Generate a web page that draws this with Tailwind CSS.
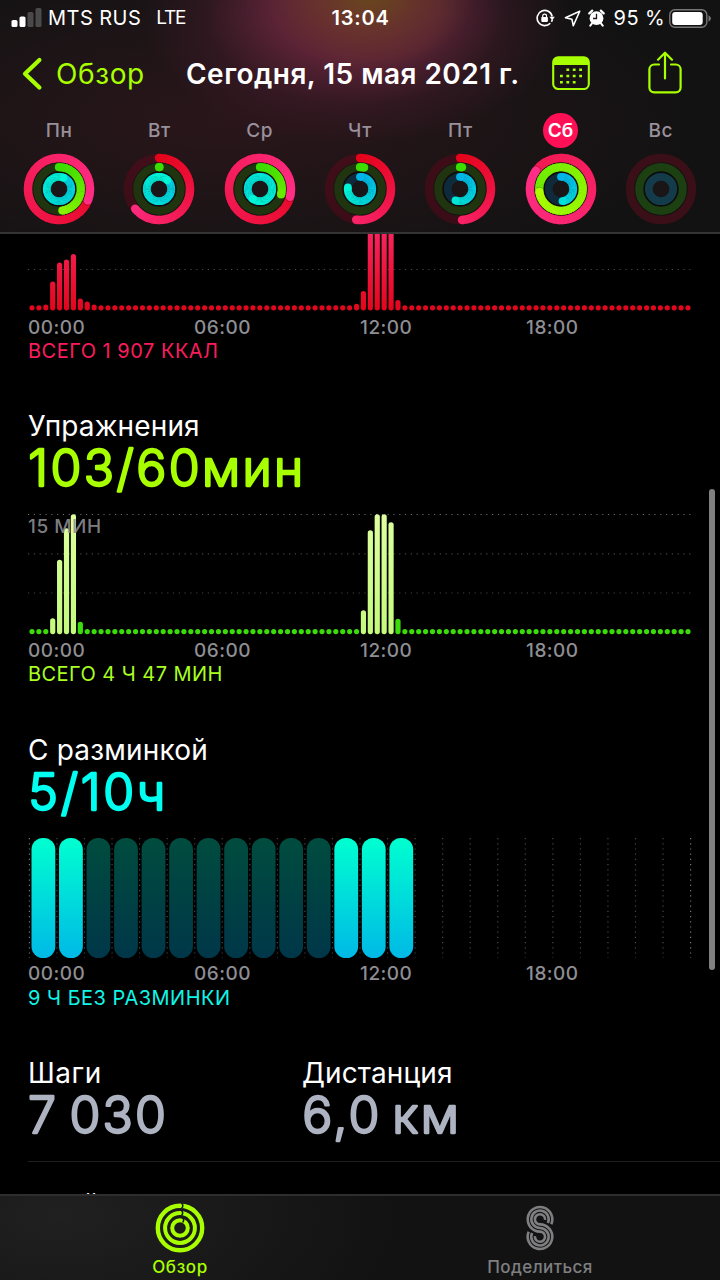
<!DOCTYPE html>
<html lang="ru">
<head>
<meta charset="utf-8">
<title>Активность</title>
<script src="https://cdn.jsdelivr.net/npm/@tailwindcss/browser@4"></script>
</head>
<body class="bg-black">
<div class="relative flex h-[1280px] w-[720px] flex-col overflow-hidden bg-black font-['Inter','Noto_Sans',sans-serif] text-white">

  <header class="flex h-[234px] shrink-0 flex-col border-b-2 border-[#353435] bg-[#121212] bg-[radial-gradient(ellipse_105px_80px_at_370px_-8px,rgba(104,78,22,0.85),rgba(108,66,30,0.45)_50%,transparent),radial-gradient(ellipse_215px_135px_at_355px_10px,rgba(112,40,62,0.95),rgba(106,38,62,0.8)_38%,rgba(80,30,50,0.35)_70%,transparent),radial-gradient(ellipse_480px_170px_at_230px_120px,rgba(58,24,32,0.6),rgba(48,24,30,0.35)_55%,transparent)]">
    <div class="flex h-9 items-center text-xl leading-9">
      <div class="flex flex-1 items-center pl-[11px]">
        <svg class="h-5 w-[31px]" viewBox="0 0 31 20"><rect x=".5" y="12" width="6" height="7" rx="1.6" fill="#fff"/><rect x="8.5" y="8.5" width="6" height="10.5" rx="1.6" fill="#fff"/><rect x="16.5" y="4" width="6" height="15" rx="1.6" fill="#4b4a4b"/><rect x="24.5" y="0" width="6" height="19" rx="1.6" fill="#4b4a4b"/></svg>
        <span class="ml-1.5 tracking-[0.45px]">MTS RUS</span>
        <span class="ml-[15px] text-[19px] tracking-[-1.2px]">LTE</span>
      </div>
      <span class="mr-0.5 font-semibold tracking-[0.8px]">13:04</span>
      <div class="flex flex-1 items-center justify-end pr-2">
        <svg class="mr-px h-[18px] w-[19px]" viewBox="0 0 19 18" fill="none" stroke="#fff" stroke-width="1.6"><path d="M16.2 7.5A7.6 7.6 0 1 0 14.3 14.2M16.4 10.5A7.6 7.6 0 0 1 15.4 12.8"/><path d="M13.4 7.8h5.4l-2.6 3.4z" fill="#fff" stroke="none"/><rect x="5.3" y="8" width="6.6" height="4.9" rx=".8" fill="#fff" stroke="none"/><path d="M6.7 8.4V7a1.9 1.9 0 0 1 3.8 0v1.4" stroke-width="1.2"/></svg>
        <svg class="mr-px ml-2 h-[17px] w-[17px]" viewBox="0 0 17 17" fill="none" stroke="#fff" stroke-width="1.6" stroke-linejoin="round"><path d="M15.7 1.3 1.4 7.7l6.5 1.5 1.4 6.6z"/></svg>
        <svg class="ml-1.5 h-[18px] w-[17px]" viewBox="0 0 17 18"><circle cx="8.5" cy="9.2" r="6.9" fill="#fff"/><g stroke="#fff" stroke-linecap="round"><path d="M1.3 4.4 4.2 1.6M15.7 4.4 12.8 1.6" stroke-width="2.2"/><path d="M4 14.4 2.3 16.6M13 14.4l1.7 2.2" stroke-width="2"/></g><path d="M8.5 4.7v4.8H5" fill="none" stroke="#241318" stroke-width="1.3"/></svg>
        <span class="ml-[9px] tracking-[0.4px]">95 %</span>
        <svg class="ml-1 h-[19px] w-[43px]" viewBox="0 0 43 19"><rect x=".8" y=".8" width="37" height="17.4" rx="5" fill="none" stroke="#777" stroke-width="1.4"/><rect x="3.2" y="3" width="30.5" height="13" rx="3" fill="#fff"/><path d="M39.5 6.2q2.4 1.2 2.4 3.3t-2.4 3.3z" fill="#777"/></svg>
      </div>
    </div>

    <nav class="flex h-[75px] items-center text-[28px] leading-8">
      <div class="flex w-[186px] items-center pl-[21px] text-[#a8ff00]">
        <svg class="h-[34px] w-[22px]" viewBox="0 0 22 34" fill="none" stroke="currentColor" stroke-width="4.2" stroke-linecap="round" stroke-linejoin="round"><path d="M18.4 3 4 16.8 18.4 30.6"/></svg>
        <span class="ml-[13px] tracking-[0.6px]">Обзор</span>
      </div>
      <h1 class="w-[366px] font-semibold tracking-[0.47px] whitespace-nowrap">Сегодня, 15 мая 2021 г.</h1>
      <svg class="mb-px h-[34px] w-[38px] text-[#a8ff00]" viewBox="0 0 38 34"><rect x="1.2" y="1.2" width="35.6" height="31.8" rx="5" fill="none" stroke="currentColor" stroke-width="2.1"/><path d="M1 9V6a5 5 0 0 1 5-5h26a5 5 0 0 1 5 5v3z" fill="currentColor"/><g fill="none" stroke="currentColor" stroke-width="2.6" stroke-dasharray="2.8 3.6"><path d="M14.4 13.8h16M8 20h22.4M8 26.2h16"/></g></svg>
      <svg class="mb-[3px] ml-[58px] h-[43px] w-[34px] text-[#a8ff00]" viewBox="0 0 34 43" fill="none" stroke="currentColor" stroke-width="2.2" stroke-linecap="round" stroke-linejoin="round"><path d="M11 13.5H6.2a4.8 4.8 0 0 0-4.8 4.8v18.2a4.8 4.8 0 0 0 4.8 4.8h21.6a4.8 4.8 0 0 0 4.8-4.8V18.3a4.8 4.8 0 0 0-4.8-4.8H23M17 27.5V1.8M10 8.7l7-7 7 7"/></svg>
    </nav>

    <div class="mt-0.5 ml-[9px] grid w-[702px] grid-cols-7 text-[19px] font-medium tracking-[0.6px] text-[#98909a]">
      <div class="flex flex-col items-center"><span class="size-[35px] text-center leading-9">Пн</span><svg class="mt-[5px] size-[72px]" viewBox="-36 -36 72 72" data-rings="1.31 0.475 1.06"></svg></div>
      <div class="flex flex-col items-center"><span class="size-[35px] text-center leading-9">Вт</span><svg class="mt-[5px] size-[72px]" viewBox="-36 -36 72 72" data-rings="0.64 0.004 1.12"></svg></div>
      <div class="flex flex-col items-center"><span class="size-[35px] text-center leading-9">Ср</span><svg class="mt-[5px] size-[72px]" viewBox="-36 -36 72 72" data-rings="1.29 0.29 1.6"></svg></div>
      <div class="flex flex-col items-center"><span class="size-[35px] text-center leading-9">Чт</span><svg class="mt-[5px] size-[72px]" viewBox="-36 -36 72 72" data-rings="0.52 0.03 0.77"></svg></div>
      <div class="flex flex-col items-center"><span class="size-[35px] text-center leading-9">Пт</span><svg class="mt-[5px] size-[72px]" viewBox="-36 -36 72 72" data-rings="0.49 0.015 0.56"></svg></div>
      <div class="flex flex-col items-center"><span class="size-[35px] rounded-full bg-[#ff0f56] text-center leading-9 font-semibold tracking-normal text-white">Сб</span><svg class="mt-[5px] size-[72px]" viewBox="-36 -36 72 72" data-rings="1.85 1.73 0.48"></svg></div>
      <div class="flex flex-col items-center"><span class="size-[35px] text-center leading-9">Вс</span><svg class="mt-[5px] size-[72px]" viewBox="-36 -36 72 72" data-rings="0 0 0"></svg></div>
    </div>
  </header>

  <main class="flex h-[960px] shrink-0 flex-col gap-[47px] overflow-hidden pl-7">
    <section>
      <svg id="move" class="block h-[81px] w-[664px]" viewBox="0 0 664 81"></svg>
      <div class="grid w-[664px] grid-cols-4 pt-px text-[19px] leading-6 font-medium tracking-[0.5px] text-[#8e8e93]"><span>00:00</span><span>06:00</span><span>12:00</span><span>18:00</span></div>
      <p class="text-xl leading-[23px] tracking-[0.5px] text-[#fa1c5c]">ВСЕГО 1 907 ККАЛ</p>
    </section>

    <section>
      <h2 class="-mb-px text-[28px] leading-8 tracking-[0.15px]">Упражнения</h2>
      <svg class="block h-16 w-[664px] overflow-visible" viewBox="0 0 664 64"><text x=".3" y="45" font-size="50" font-weight="300" textLength="275" fill="#a8ff00" stroke="#a8ff00" stroke-width="2.3" stroke-linejoin="round">103/60мин</text></svg>
      <div class="relative">
        <svg id="exercise" class="block h-[133px] w-[664px]" viewBox="0 0 664 133"></svg>
        <span class="absolute top-[10px] left-0 text-[19px] leading-6 font-medium tracking-[0.5px] text-[#8e8e93]/90">15 МИН</span>
      </div>
      <div class="grid w-[664px] grid-cols-4 pt-px text-[19px] leading-6 font-medium tracking-[0.5px] text-[#8e8e93]"><span>00:00</span><span>06:00</span><span>12:00</span><span>18:00</span></div>
      <p class="text-xl leading-[23px] tracking-[0.45px] text-[#a8ff20]">ВСЕГО 4 Ч 47 МИН</p>
    </section>

    <section class="mt-px">
      <h2 class="-mb-px text-[28px] leading-8 tracking-[0.2px]">С разминкой</h2>
      <svg class="block h-16 w-[664px] overflow-visible" viewBox="0 0 664 64"><text x=".3" y="45" font-size="50" font-weight="300" textLength="137" fill="#00fff0" stroke="#00fff0" stroke-width="2.3" stroke-linejoin="round">5/10ч</text></svg>
      <svg id="stand" class="block h-[133px] w-[664px]" viewBox="0 0 664 133"><defs><linearGradient id="lit" x2="0" y2="1"><stop stop-color="#00ffd0"/><stop offset="1" stop-color="#00b9e6"/></linearGradient><linearGradient id="dim" x2="0" y2="1"><stop stop-color="#004c3e"/><stop offset="1" stop-color="#003749"/></linearGradient></defs></svg>
      <div class="grid w-[664px] grid-cols-4 text-[19px] leading-6 font-medium tracking-[0.5px] text-[#8e8e93]"><span>00:00</span><span>06:00</span><span>12:00</span><span>18:00</span></div>
      <p class="text-xl leading-6 tracking-[0.5px] text-[#10f5e6]">9 Ч БЕЗ РАЗМИНКИ</p>
    </section>

    <section>
      <div class="grid h-[105px] grid-cols-[274px_1fr] border-b border-[#1f1f20]">
        <div>
          <h2 class="-mb-px text-[28px] leading-8 tracking-[0.5px]">Шаги</h2>
          <svg class="block h-16 w-[270px] overflow-visible" viewBox="0 0 270 64"><text x="0" y="45" font-size="50" font-weight="300" word-spacing="-5" textLength="138" fill="#aeb3c2" stroke="#aeb3c2" stroke-width="2.3" stroke-linejoin="round">7 030</text></svg>
        </div>
        <div>
          <h2 class="-mb-px text-[28px] leading-8 tracking-[0.1px]">Дистанция</h2>
          <svg class="block h-16 w-[270px] overflow-visible" viewBox="0 0 270 64"><text x=".3" y="45" font-size="50" font-weight="300" word-spacing="-6" textLength="156.5" fill="#aeb3c2" stroke="#aeb3c2" stroke-width="2.3" stroke-linejoin="round">6,0 км</text></svg>
        </div>
      </div>
      <h2 class="mt-[26.5px] text-[28px] leading-8">Пройдено</h2>
    </section>
  </main>

  <footer class="grid h-[86px] shrink-0 grid-cols-2 border-t-2 border-[#2e2e2f] bg-[#121212] bg-[radial-gradient(ellipse_340px_160px_at_60px_20px,#202021,transparent)] text-[17px] leading-5 font-medium">
    <a class="flex flex-col items-center pt-[7px] tracking-[0.6px] text-[#a8ff00]">
      <svg class="size-[50px]" viewBox="-25 -25 50 50" fill="none" stroke="currentColor"><circle r="22.2" stroke-width="4.4"/><circle r="14.9" stroke-width="4"/><circle r="7.8" stroke-width="4"/><g stroke="#151a10" stroke-width="1.5"><path d="M1.5-25.2q2.6 2.9 0 5.8M1.5-17.4q2.4 2.5 0 5M2.4-10.6q2.4 2.6 .2 5.2"/></g></svg>
      <span class="mt-1">Обзор</span>
    </a>
    <a class="flex flex-col items-center pt-[7px] tracking-[0.4px] text-[#7f7f82]">
      <svg class="size-[50px]" viewBox="-25 -25 50 50" fill="none" stroke="currentColor" stroke-width="2.6"><path d="M11.3-3.8A12.3 12.3 0 1 0 0 3.6A5.1 5.1 0 1 1-5.1 8.2"/><path d="M7.9-5A8.7 8.7 0 1 0 0 0A8.7 8.7 0 1 1-7.9 5"/><path d="M5.1-8.2A5.1 5.1 0 1 0 0-3.6A12.3 12.3 0 1 1-11.3 3.8"/></svg>
      <span class="mt-1">Поделиться</span>
    </a>
  </footer>

  <div class="absolute top-[489px] left-[709px] h-[481px] w-1.5 rounded-full bg-[#808080]"></div>
</div>

<script>
const NS = 'http://www.w3.org/2000/svg';
function add(parent, tag, attrs) {
  const el = document.createElementNS(NS, tag);
  for (const k in attrs) el.setAttribute(k, attrs[k]);
  parent.appendChild(el);
  return el;
}
const blend = (a, b, t) => a.map((v, i) => Math.round(v + (b[i] - v) * t));
const mix = (a, b, t) => 'rgb(' + blend(a, b, t).join(',') + ')';

// Activity rings: radius, start colour, end colour, track, empty-day track
const RINGS = [
  [31, [228, 4, 26], [255, 46, 134], 'rgba(130,0,28,.32)', '#3b0f17'],
  [21.8, [58, 221, 0], [172, 255, 0], '#20340f', '#1c4012'],
  [12.2, [0, 180, 232], [0, 245, 212], '#0f2b3b', '#133b4a']
];
document.querySelectorAll('[data-rings]').forEach(svg => {
  const values = svg.dataset.rings.split(' ').map(Number);
  const empty = values.every(v => v === 0);
  add(svg, 'circle', { r: 26, fill: '#0d0b0c' });
  add(svg, 'circle', { r: 8.2, fill: '#1a1517' });
  RINGS.forEach(([r, base, c1, track, off], i) => {
    const v = values[i], w = i === 0 ? 8.4 : i === 1 ? 8.2 : 7.8;
    add(svg, 'circle', { r, fill: 'none', stroke: empty ? off : track, 'stroke-width': w });
    if (!v) return;
    const c0 = v > 1 ? blend(base, c1, Math.min(.8, (v - 1) * .6 + (i === 2 ? .3 : 0))) : base;
    const from = Math.max(0, v - 1), span = Math.min(1, v), n = Math.max(1, Math.round(span * 90));
    const pt = f => [r * Math.sin(f * 2 * Math.PI), -r * Math.cos(f * 2 * Math.PI)];
    if (v < 1) { const [x, y] = pt(0); add(svg, 'circle', { cx: x, cy: y, r: w / 2, fill: mix(c0, c1, 0) }); }
    for (let k = 0; k < n; k++) {
      const [x0, y0] = pt(from + span * k / n), [x1, y1] = pt(from + span * (k + 1) / n + (k < n - 1 ? .004 : 0));
      add(svg, 'path', { d: `M${x0} ${y0}A${r} ${r} 0 0 1 ${x1} ${y1}`, fill: 'none', stroke: mix(c0, c1, (k + .5) / n * Math.min(1, v * 1.4)), 'stroke-width': w });
    }
    const [ex, ey] = pt(from + span);
    if (v >= 1 && i < 2) {
      const [sx, sy] = pt(from + .006);
      add(svg, 'circle', { cx: sx, cy: sy, r: w / 2, fill: 'rgba(0,0,0,.2)' });
    }
    add(svg, 'circle', { cx: ex, cy: ey, r: w / 2, fill: mix(c0, c1, Math.min(1, v * 1.4)) });
  });
});

// Bars: one per quarter of an hour
function bars(id, bottom, heights, gridLines, colour) {
  const svg = document.getElementById(id);
  gridLines.forEach(([y, c]) => add(svg, 'path', { d: `M0 ${y}H664`, stroke: c, 'stroke-width': 1.2, 'stroke-dasharray': '1.2 4.6' }));
  for (let i = 0; i < 96; i++) {
    const h = heights[i] || 5.2;
    add(svg, 'rect', { x: 1.4 + i * 6.905, y: bottom - h, width: 5.2, height: h, rx: 2.6, fill: colour(i, h) });
  }
}
const move = document.getElementById('move');
const mg = add(move, 'linearGradient', { id: 'mg', gradientUnits: 'userSpaceOnUse', x1: 0, y1: -20, x2: 0, y2: 76 });
add(mg, 'stop', { 'stop-color': '#ff2a6e' });
add(mg, 'stop', { offset: 1, 'stop-color': '#e2061c' });
bars('move', 76.4, { 2: 5.8, 3: 28.8, 4: 47.8, 5: 51, 6: 56.4, 7: 12, 8: 9, 9: 5.8, 47: 6.6, 48: 19.5, 49: 100, 50: 100, 51: 100, 52: 100, 53: 10.5 },
  [[35.5, '#48484a']], () => 'url(#mg)');

const ex = document.getElementById('exercise');
const eg = add(ex, 'linearGradient', { id: 'eg', gradientUnits: 'userSpaceOnUse', x1: 0, y1: 9, x2: 0, y2: 129 });
add(eg, 'stop', { 'stop-color': '#deffa0' });
add(eg, 'stop', { offset: 1, 'stop-color': '#c4fa7c' });
bars('exercise', 129.2, { 3: 16, 4: 74.5, 5: 106, 6: 120, 7: 12.5, 48: 24, 49: 104, 50: 120, 51: 120, 52: 112, 53: 15.5 },
  [[9.5, '#69696b'], [48.8, '#454547'], [88, '#454547']], (i, h) => h > 15.8 ? 'url(#eg)' : '#3cdc0a');

// Stand hours
const st = document.getElementById('stand');
for (let i = 0; i <= 24; i++)
  add(st, 'path', { d: `M${1.4 + i * 27.55} 9V129`, stroke: i % 24 ? '#48484a' : '#77777a', 'stroke-width': 1.2, 'stroke-dasharray': '1.2 4' });
for (let i = 0; i < 14; i++)
  add(st, 'rect', { x: 3.5 + i * 27.53, y: 9, width: 23.8, height: 120, rx: 11.5, fill: i < 2 || i > 10 ? 'url(#lit)' : 'url(#dim)' });
</script>
</body>
</html>
